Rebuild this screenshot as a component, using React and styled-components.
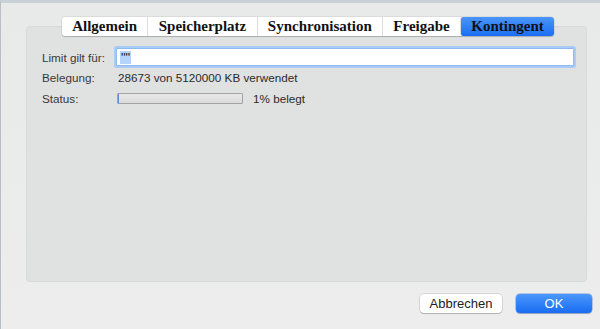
import styled, { createGlobalStyle } from "styled-components";

const Global = createGlobalStyle`
  html, body { margin: 0; padding: 0; }
  body {
    width: 600px;
    height: 329px;
    overflow: hidden;
    font-family: "Liberation Sans", Arial, sans-serif;
  }
`

const Window = styled.div`
  height: 329px;
  box-sizing: border-box;
  background: linear-gradient(to bottom, #e8e9e9, #ecedec);
  border-top: 3px solid #c9d1d7;
  border-left: 1px solid #b9bec2;
  padding: 14px 8px 0 25px;
  display: flex;
  flex-direction: column;
`

const TabBar = styled.div`
  align-self: center;
  margin-left: -2px;
  display: flex;
  position: relative;
  z-index: 1;
  background: #fff;
  border-radius: 3px;
  box-shadow: 0 0 0 0.5px rgba(0,0,0,0.12), 0 1px 1px rgba(0,0,0,0.18);
`

const Tab = styled.div`
  height: 19px;
  line-height: 19px;
  padding: 0 10.3px;
  font-family: "Liberation Serif", "Times New Roman", serif;
  font-weight: bold;
  font-size: 15px;
  color: #111;
  border-left: ${p => p.$first ? "none" : "1px solid #dcdcdc"};
  border-radius: ${p => p.$active ? "3px" : "0"};
  background: ${p => p.$active ? "linear-gradient(to bottom, #4996fa, #1b6ef3)" : "transparent"};
`

const Panel = styled.div`
  margin-top: -10px;
  margin-right: 5px;
  height: 256px;
  box-sizing: border-box;
  background: #e0e1e1;
  border: 1px solid #d8d9d9;
  border-radius: 4px;
  padding: 20px 12px 0 15px;
  display: flex;
  flex-direction: column;
`

const Row = styled.div`
  display: flex;
  align-items: center;
  height: ${p => p.$h || 20}px;
  font-size: 11.7px;
  color: #2b2b2b;
`

const Label = styled.div`
  width: 74px;
  flex: none;
  color: #3a3a3a;
`

const Value = styled.div`
  padding-left: 2px;
`

const Input = styled.div`
  flex: 1;
  height: 16px;
  background: #fff;
  border: 1px solid #8fb9f2;
  box-shadow: 0 0 0 2px #a8cbf7;
  border-radius: 1px;
  display: flex;
  align-items: center;
  padding-left: 3px;
  font-size: 13px;
  color: #222;
`

const Selected = styled.span`
  background: #b4d4fc;
  padding: 0 1px;
  line-height: 13px;
`

const Progress = styled.div`
  width: 124px;
  height: 9px;
  border: 1px solid #a3a3a3;
  border-radius: 1px;
  margin-left: 1px;
  background: linear-gradient(to bottom, #e9e9e9, #dadada);
  display: flex;
`

const Fill = styled.div`
  height: 100%;
  background: #5f8fe0;
`

const ProgressText = styled.span`
  margin-left: 10px;
`

const Footer = styled.div`
  display: flex;
  justify-content: flex-end;
  gap: 14px;
  margin-top: 12px;
`

const Button = styled.div`
  height: 19px;
  line-height: 19px;
  width: ${p => p.$w}px;
  text-align: center;
  border-radius: 4px;
  font-size: 13px;
  color: ${p => p.$primary ? "#fff" : "#222"};
  background: ${p => p.$primary ? "linear-gradient(to bottom, #4b97fb, #1a6cf2)" : "#fff"};
  box-shadow: ${p => p.$primary ? "0 0 0 0.5px rgba(20,80,200,0.5), 0 1px 1px rgba(0,0,0,0.2)" : "0 0 0 0.5px rgba(0,0,0,0.18), 0 1px 1px rgba(0,0,0,0.18)"};
`

const tabs = ["Allgemein", "Speicherplatz", "Synchronisation", "Freigabe", "Kontingent"]

export default function App() {
  const used = 28673
  const total = 5120000
  const pct = Math.max(1, Math.round((used / total) * 100))
  return (
    <>
      <Global />
      <Window>
        <TabBar>
          {tabs.map((t, i) => (
            <Tab key={t} $first={i === 0} $active={t === "Kontingent"}>{t}</Tab>
          ))}
        </TabBar>
        <Panel>
          <Row $h={20}>
            <Label>Limit gilt für:</Label>
            <Input><Selected>""</Selected></Input>
          </Row>
          <Row $h={21}>
            <Label>Belegung:</Label>
            <Value>{used} von {total} KB verwendet</Value>
          </Row>
          <Row $h={20}>
            <Label>Status:</Label>
            <Progress><Fill style={{ width: `${pct}%` }} /></Progress>
            <ProgressText>{pct}% belegt</ProgressText>
          </Row>
        </Panel>
        <Footer>
          <Button $w={82}>Abbrechen</Button>
          <Button $w={76} $primary>OK</Button>
        </Footer>
      </Window>
    </>
  )
}
